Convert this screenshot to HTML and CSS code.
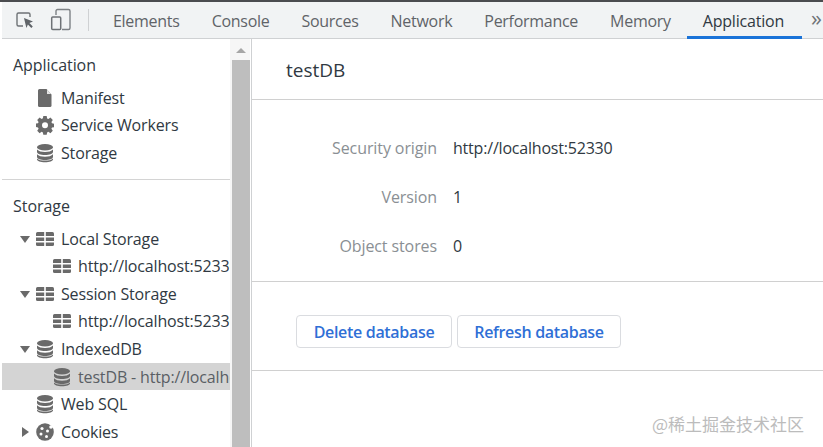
FILE: index.html
```html
<!DOCTYPE html>
<html lang="en">
<head>
<meta charset="utf-8">
<title>DevTools</title>
<link rel="stylesheet" href="styles.css">
</head>
<body>
<div class="app">
  <header class="toolbar">
    <div class="tool-icons">
      <svg class="ti" width="20" height="20" viewBox="0 0 20 20"><path d="M8 16H3.500A1.500 1.500 0 0 1 2 14.500V4.500A1.500 1.500 0 0 1 3.500 3h10A1.500 1.500 0 0 1 15 4.500V7" fill="none" stroke="#6e7276" stroke-width="1.400"/><path d="M9 8l9 3.500-3.600 1.500 3.400 3.600-1.500 1.400-3.400-3.600-1.500 3.500z" fill="#5f6368"/></svg>
      <svg class="ti" width="22" height="24" viewBox="0 0 22 24"><path d="M6 7V3a1.500 1.500 0 0 1 1.500-1.500h11A1.500 1.500 0 0 1 20 3v17a1.500 1.500 0 0 1-1.500 1.500H12" fill="none" stroke="#7d8185" stroke-width="1.400"/><rect x="1.700" y="9" width="9" height="12.500" rx="1" fill="none" stroke="#6e7276" stroke-width="1.500"/></svg>
    </div>
    <span class="tool-sep"></span>
    <nav class="tabs">
      <span class="tab">Elements</span>
      <span class="tab">Console</span>
      <span class="tab">Sources</span>
      <span class="tab">Network</span>
      <span class="tab">Performance</span>
      <span class="tab">Memory</span>
      <span class="tab active">Application</span>
    </nav>
    <span class="more">»</span>
  </header>
  <div class="body">
    <aside class="side">
      <div class="tree">
        <section class="group first">
          <h2 class="group-title">Application</h2>
          <div class="row"><span class="arrow"></span><svg class="ic" viewBox="0 0 18 20"><use href="#i-file"/></svg><span class="lbl">Manifest</span></div>
          <div class="row"><span class="arrow"></span><svg class="ic" viewBox="0 0 18 20"><use href="#i-gear"/></svg><span class="lbl">Service Workers</span></div>
          <div class="row"><span class="arrow"></span><svg class="ic" viewBox="0 0 18 20"><use href="#i-db"/></svg><span class="lbl">Storage</span></div>
        </section>
        <section class="group">
          <h2 class="group-title">Storage</h2>
          <div class="row"><span class="arrow down"></span><svg class="ic" viewBox="0 0 18 20"><use href="#i-grid"/></svg><span class="lbl">Local Storage</span></div>
          <div class="row sub"><span class="arrow"></span><svg class="ic" viewBox="0 0 18 20"><use href="#i-grid"/></svg><span class="lbl">http://localhost:52330</span></div>
          <div class="row"><span class="arrow down"></span><svg class="ic" viewBox="0 0 18 20"><use href="#i-grid"/></svg><span class="lbl">Session Storage</span></div>
          <div class="row sub"><span class="arrow"></span><svg class="ic" viewBox="0 0 18 20"><use href="#i-grid"/></svg><span class="lbl">http://localhost:52330</span></div>
          <div class="row"><span class="arrow down"></span><svg class="ic" viewBox="0 0 18 20"><use href="#i-db"/></svg><span class="lbl">IndexedDB</span></div>
          <div class="row sub selected"><span class="arrow"></span><svg class="ic" viewBox="0 0 18 20"><use href="#i-db"/></svg><span class="lbl">testDB - http://localhost:52330</span></div>
          <div class="row"><span class="arrow"></span><svg class="ic" viewBox="0 0 18 20"><use href="#i-db"/></svg><span class="lbl">Web SQL</span></div>
          <div class="row"><span class="arrow right"></span><svg class="ic" viewBox="0 0 18 20"><use href="#i-cookie"/></svg><span class="lbl">Cookies</span></div>
        </section>
      </div>
      <div class="scrollbar">
        <span class="scroll-up"></span>
        <span class="scroll-thumb"></span>
      </div>
    </aside>
    <main class="content">
      <h1 class="db-title">testDB</h1>
      <dl class="info">
        <div class="info-row"><dt>Security origin</dt><dd>http://localhost:52330</dd></div>
        <div class="info-row"><dt>Version</dt><dd>1</dd></div>
        <div class="info-row"><dt>Object stores</dt><dd>0</dd></div>
      </dl>
      <div class="actions">
        <button class="btn delete" type="button">Delete database</button>
        <button class="btn refresh" type="button">Refresh database</button>
      </div>
    </main>
  </div>
  <div class="watermark">@稀土掘金技术社区</div>
</div>
<svg class="defs" width="0" height="0" aria-hidden="true">
  <defs>
    <symbol id="i-file" viewBox="0 0 18 20"><path d="M3.500 1h7l5 5.500V18a1.500 1.500 0 0 1-1.500 1H3.500A1.500 1.500 0 0 1 2 18V2.500A1.500 1.500 0 0 1 3.500 1z" fill="#6a6a6a"/><path d="M11 1.500v4.500h4z" fill="#e4e4e4"/></symbol>
    <symbol id="i-gear" viewBox="0 0 18 20"><path fill-rule="evenodd" fill="#6a6a6a" d="M7.300 1h3.400l.4 2.400 1.300.6 2-1.400 2.400 2.400-1.400 2 .6 1.300 2.400.4v3.400l-2.400.4-.6 1.300 1.400 2-2.400 2.400-2-1.400-1.300.6-.4 2.400H7.300l-.4-2.400-1.300-.6-2 1.400-2.400-2.400 1.400-2-.6-1.300L-.4 12V8.600L2 8.200l.6-1.300-1.400-2 2.400-2.400 2 1.400 1.300-.6zM9 7.300a3 3 0 1 0 0 6 3 3 0 0 0 0-6z"/></symbol>
    <symbol id="i-db" viewBox="0 0 18 20"><g fill="#6a6a6a"><ellipse cx="9" cy="4.300" rx="8" ry="3.200"/><path d="M1 6.500c1.500 1.700 4.500 2.500 8 2.500s6.500-.8 8-2.500V9c0 1.700-3.500 3-8 3S1 10.700 1 9z"/><path d="M1 11c1.500 1.700 4.500 2.500 8 2.500s6.500-.8 8-2.500v2.700c0 1.700-3.500 3-8 3s-8-1.300-8-3z" transform="translate(0 .2)"/></g><path d="M1 15.400c1.500 1.500 4.500 2.200 8 2.200s6.500-.7 8-2.200v1.200c0 1.500-3.500 2.700-8 2.700s-8-1.200-8-2.700z" fill="#6a6a6a"/></symbol>
    <symbol id="i-grid" viewBox="0 0 18 20"><g fill="#6a6a6a"><path d="M0 4.500A1.500 1.500 0 0 1 1.500 3H8.200v4H0z"/><path d="M9.800 3h6.700A1.500 1.500 0 0 1 18 4.500V7H9.800z"/><rect x="0" y="8.500" width="8.200" height="3.500"/><rect x="9.800" y="8.500" width="8.200" height="3.500"/><path d="M0 13.500h8.200V17H1.500A1.500 1.500 0 0 1 0 15.500z"/><path d="M9.800 13.500H18v2a1.500 1.500 0 0 1-1.500 1.500H9.800z"/></g></symbol>
    <symbol id="i-cookie" viewBox="0 0 18 20"><circle cx="9" cy="10" r="8.800" fill="#6a6a6a"/><g fill="#fff"><circle cx="6" cy="6.500" r="1.600"/><circle cx="11.500" cy="9" r="1.500"/><circle cx="5" cy="12" r="1.500"/><circle cx="10.500" cy="14.500" r="1.500"/><circle cx="15" cy="5" r="1.800"/></g></symbol>
  </defs>
</svg>
</body>
</html>
```
FILE: styles.css
```css
* { box-sizing: border-box; }
html, body { margin: 0; padding: 0; height: 100%; background: #fff; overflow: hidden; }
body { font-family: "Open Sans", "Noto Sans CJK SC", sans-serif; color: #303942; }
.defs { display: block; height: 0; }
.app { position: relative; width: 823px; height: 447px; overflow: hidden; border-top: 2px solid #4a4c4f; display: flex; flex-direction: column; }

.toolbar { height: 37px; flex: none; display: flex; align-items: stretch; background: #f1f3f4; border-bottom: 1px solid #cfd1d3; margin-left: 2px; }
.tool-icons { display: flex; align-items: center; gap: 15px; padding-left: 13px; width: 85px; flex: none; }
.ti { display: block; flex: none; }
.tool-sep { width: 1px; height: 22px; background: #cfd1d3; margin: 7px 0 0 1px; flex: none; }
.tabs { display: flex; margin-left: 24px; flex: none; }
.tab { font-size: 16px; letter-spacing: -.28px; color: #5f6368; line-height: 38px; margin-right: 32px; white-space: nowrap; }
.tab.active { color: #303942; letter-spacing: -.2px; border-bottom: 3px solid #1a73d8; margin-left: -16px; padding: 0 18px 0 16px; margin-right: 0; height: 37px; }
.more { font-size: 22px; color: #6e7276; margin-left: 9px; line-height: 30px; flex: none; }

.body { flex: 1; display: flex; min-height: 0; }
.side { width: 250px; flex: none; display: flex; margin-left: 2px; border-right: 1px solid #cfd1d3; }
.tree { width: 228px; flex: none; overflow: hidden; }
.group { border-top: 1px solid #d4d4d4; padding: 13px 0 13px; }
.group.first { border-top: 0; padding: 13px 0 12px; }
.group-title { margin: 0 0 6px 11px; font-size: 16px; line-height: 26px; font-weight: 400; letter-spacing: -.05px; color: #303942; }
.first .group-title { margin-bottom: 6px; }
.row { height: 27.600px; display: flex; align-items: center; white-space: nowrap; padding-left: 18px; }
.row.sub { padding-left: 35px; }
.row.selected { background: #d4d4d4; color: #5a5f65; }
.arrow { width: 11px; height: 10px; flex: none; margin-right: 5px; position: relative; }
.arrow.down::before { content: ""; position: absolute; left: 0; top: 2px; border-left: 5px solid transparent; border-right: 5px solid transparent; border-top: 7px solid #6a6a6a; }
.arrow.right::before { content: ""; position: absolute; left: 2px; top: 0; border-top: 5px solid transparent; border-bottom: 5px solid transparent; border-left: 7px solid #6a6a6a; }
.ic { width: 18px; height: 20px; flex: none; margin-right: 7px; overflow: visible; }
.lbl { font-size: 16px; letter-spacing: -.15px; }

.scrollbar { width: 20px; flex: none; padding: 0 0 0 2px; background: #f6f6f6; display: flex; flex-direction: column; align-items: stretch; }
.scroll-up { height: 21px; flex: none; position: relative; }
.scroll-up::before { content: ""; position: absolute; left: 4px; top: 9px; border-left: 5px solid transparent; border-right: 5px solid transparent; border-bottom: 5px solid #a6a6a6; }
.scroll-thumb { flex: 1; background: #bebebe; }

.content { flex: 1; min-width: 0; }
.db-title { margin: 0; height: 61px; padding: 2px 0 0 34px; font-size: 19px; line-height: 59px; font-weight: 400; color: #303942; border-bottom: 1px solid #d0d0d0; }
.info { margin: 0; height: 182px; padding: 23px 0 0; border-bottom: 1px solid #d0d0d0; }
.info-row { display: flex; height: 49px; align-items: center; }
.info-row dt { width: 185px; text-align: right; font-size: 16px; letter-spacing: -.1px; color: #8a8f94; }
.info-row dd { margin: 0 0 0 16px; font-size: 16px; letter-spacing: -.2px; color: #303942; }
.actions { height: 89px; padding: 33px 0 0 44px; display: flex; gap: 5px; align-items: flex-start; border-bottom: 1px solid #d0d0d0; }
.btn { height: 33px; border: 1px solid #dadce0; border-radius: 4px; background: #fff; color: #2f6fd6; font: 600 16px "Open Sans", sans-serif; letter-spacing: -.32px; padding: 0; }
.delete { width: 156px; }
.refresh { width: 164px; }

.watermark { position: absolute; left: 652px; top: 409px; font-size: 17px; color: #bcbcbc; white-space: nowrap; font-family: "Noto Sans CJK SC", sans-serif; }
```
